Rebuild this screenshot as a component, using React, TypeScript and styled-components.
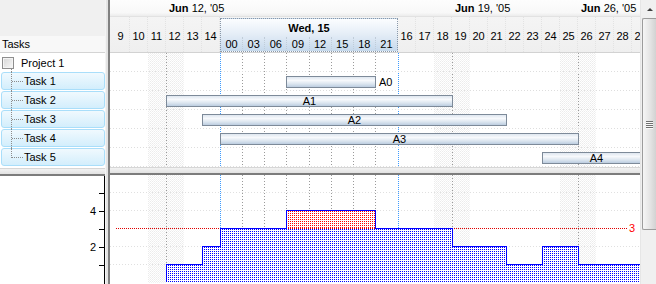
import React from 'react';
import styled, { createGlobalStyle } from 'styled-components';

const Global = createGlobalStyle`
  html, body { margin: 0; padding: 0; background: #fff; }
  body { font-family: "Liberation Sans", Arial, sans-serif; font-size: 11px; color: #000; }
  * { box-sizing: border-box; }
`;

/* ---------- time scale helpers ---------- */
const DAY_W = 18;
const EXP_W = 178;
const dayX = (d: number) => (d <= 15 ? 2 + (d - 9) * DAY_W : 288 + (d - 16) * DAY_W);
const hourX = (h: number) => Math.floor(110 + (h / 24) * EXP_W);
const CHART_W = 530;

const days = Array.from({ length: 21 }, (_, i) => 9 + i);
const hours = ['00', '03', '06', '09', '12', '15', '18', '21'];
const weekends = [11, 18, 25];
const weeks = [
  { day: 12, label: '12, \'05' },
  { day: 19, label: '19, \'05' },
  { day: 26, label: '26, \'05' },
];

type Bar = { row: number; x1: number; x2: number; label: string; outside?: boolean };
const bars: Bar[] = [
  { row: 1, x1: hourX(9), x2: hourX(21), label: 'A0', outside: true },
  { row: 2, x1: dayX(12), x2: dayX(19), label: 'A1' },
  { row: 3, x1: dayX(14), x2: dayX(22), label: 'A2' },
  { row: 4, x1: dayX(15), x2: dayX(26), label: 'A3' },
  { row: 5, x1: dayX(24), x2: dayX(30), label: 'A4' },
];

/* ---------- frame ---------- */
const Frame = styled.div`
  display: flex;
  width: 656px;
  height: 284px;
  overflow: hidden;
  background: #fff;
`;

const HSplit = styled.div`
  height: 8px;
  flex: none;
  background: linear-gradient(#f2f2f2, #e2e2e2);
  border-top: 1px solid #d6d6d6;
  border-bottom: 2px solid #7c7c7c;
`;

const VSplit = styled.div`
  width: 5px;
  flex: none;
  background: #e4e4e4;
  border-right: 2px solid #808080;
  border-left: 1px solid #f4f4f4;
`;

/* ---------- left panel ---------- */
const LeftCol = styled.div`
  width: 105px;
  flex: none;
  display: flex;
  flex-direction: column;
`;

const LeftTop = styled.div`
  height: 168px;
  flex: none;
  display: flex;
  flex-direction: column;
`;

const Blank = styled.div`
  height: 36px;
  background: #f0f0f0;
`;

const ColHeader = styled.div`
  height: 17px;
  background: #f8f8f8;
  border-bottom: 1px solid #d4d4d4;
  padding-left: 2px;
  line-height: 16px;
`;

const ProjectRow = styled.div`
  height: 19px;
  display: flex;
  align-items: center;
  padding-left: 2px;
  gap: 7px;
  position: relative;
  &::after {
    content: '';
    position: absolute;
    left: 11px;
    top: 16px;
    bottom: 0;
    border-left: 1px dotted #8c8c8c;
  }
`;

const CheckBox = styled.span`
  width: 12px;
  height: 12px;
  border: 1px solid #8e8e8e;
  background: linear-gradient(135deg, #d6d6d6, #f8f8f8);
  box-shadow: inset 0 0 0 1px #f4f4f4;
`;

const TaskRow = styled.div<{ $last?: boolean }>`
  height: 19px;
  padding: 0 0 1px 1px;
  position: relative;
  &::before {
    content: '';
    position: absolute;
    left: 11px;
    top: 0;
    height: ${(p) => (p.$last ? '10px' : '19px')};
    border-left: 1px dotted #8c8c8c;
    z-index: 1;
  }
`;

const TaskBox = styled.div`
  height: 18px;
  border: 1px solid #a9defa;
  border-radius: 3px;
  background: linear-gradient(#f0f9fe, #d3eefc);
  display: flex;
  align-items: center;
  padding-left: 22px;
  position: relative;
  &::before {
    content: '';
    position: absolute;
    left: 10px;
    width: 11px;
    top: 8px;
    border-top: 1px dotted #8c8c8c;
  }
`;

const LeftBottom = styled.div`
  flex: 1;
  position: relative;
`;

/* ---------- chart ---------- */
const ChartCol = styled.div`
  width: ${CHART_W}px;
  flex: none;
  display: flex;
  flex-direction: column;
  overflow: hidden;
`;

const TopBand = styled.div`
  height: 17px;
  flex: none;
  display: flex;
  background: linear-gradient(#fdfdfd 0%, #f8f8f8 80%, #ececec 100%);
  border-bottom: 1px solid #e2e2e2;
  white-space: nowrap;
`;

const WeekCell = styled.div<{ $w: number }>`
  width: ${(p) => p.$w}px;
  flex: none;
  padding-left: 3px;
  line-height: 16px;
  b { font-weight: bold; }
`;

const DayBand = styled.div`
  height: 36px;
  flex: none;
  display: flex;
  padding-left: 2px;
  background: linear-gradient(#f4f4f4, #efefef);
  border-bottom: 1px solid #d2d2d2;
`;

const DayCell = styled.div`
  width: ${DAY_W}px;
  flex: none;
  display: flex;
  align-items: center;
  justify-content: center;
  padding-top: 2px;
  border-right: 1px dotted #e2e2e2;
`;

const ExpandedDay = styled.div`
  width: ${EXP_W}px;
  flex: none;
  margin-top: 1px;
  border: 1px dotted #8a98a8;
  background: linear-gradient(#fbfdff, #e6eef7 45%, #c6d9ec);
  display: flex;
  flex-direction: column;
`;

const ExpTitle = styled.div`
  height: 18px;
  line-height: 18px;
  text-align: center;
  font-weight: bold;
`;

const HourRow = styled.div`
  display: flex;
  height: 15px;
  line-height: 14px;
`;

const HourCell = styled.div`
  flex: 1;
  text-align: center;
  & + & { border-left: 1px dotted #c0ccd8; }
`;

const Body = styled.div`
  height: 114px;
  flex: none;
  position: relative;
`;

const Layer = styled.svg`
  position: absolute;
  left: 0;
  top: 0;
  display: block;
`;

const BarBox = styled.div`
  position: absolute;
  height: 12px;
  border: 1px solid #7d8a99;
  background: linear-gradient(#dfe7f0, #f7f9fc 35%, #dbe5ef 70%, #bccde0);
  display: flex;
  align-items: center;
  justify-content: center;
  line-height: 10px;
  white-space: nowrap;
`;

const OutLabel = styled.span`
  position: absolute;
  left: 100%;
  margin-left: 4px;
`;

const Histo = styled.div`
  flex: 1;
  position: relative;
`;

/* ---------- scrollbar ---------- */
const ScrollCol = styled.div`
  width: 16px;
  flex: none;
  display: flex;
  flex-direction: column;
  background: #f0f0f0;
  border-left: 1px solid #e6e6e6;
`;

const ArrowBtn = styled.div`
  height: 18px;
  flex: none;
  display: flex;
  align-items: center;
  justify-content: center;
  padding-left: 2px;
  &::before {
    content: '';
    border-left: 3px solid transparent;
    border-right: 3px solid transparent;
    border-bottom: 3px solid #404040;
  }
`;

const Thumb = styled.div`
  height: 212px;
  flex: none;
  margin-left: 1px;
  border: 1px solid #9c9c9c;
  border-right: none;
  border-radius: 2px 0 0 2px;
  background: linear-gradient(90deg, #f6f6f6, #e6e6e6 50%, #d2d2d2);
  display: flex;
  flex-direction: column;
  align-items: center;
  justify-content: center;
  gap: 1px;
`;

const Grip = styled.span`
  width: 7px;
  height: 1px;
  background: #707070;
  box-shadow: 0 1px 0 #fafafa;
`;

/* ---------- shared grid drawing ---------- */
const Patterns = ({ id }: { id: string }) => (
  <defs>
    <pattern id={`wk${id}`} width="2" height="2" patternUnits="userSpaceOnUse">
      <rect width="1" height="1" fill="#ececec" shapeRendering="crispEdges" />
      <rect x="1" y="1" width="1" height="1" fill="#f2f2f2" shapeRendering="crispEdges" />
    </pattern>
    <pattern id={`bl${id}`} width="2" height="2" patternUnits="userSpaceOnUse">
      <rect width="2" height="2" fill="#fff" shapeRendering="crispEdges" />
      <rect width="1" height="1" fill="#0000ff" shapeRendering="crispEdges" />
    </pattern>
    <pattern id={`rd${id}`} width="2" height="2" patternUnits="userSpaceOnUse">
      <rect width="2" height="2" fill="#fff" shapeRendering="crispEdges" />
      <rect width="1" height="1" fill="#ff0000" shapeRendering="crispEdges" />
    </pattern>
  </defs>
);

const VGrid = ({ h, id }: { h: number; id: string }) => (
  <g shapeRendering="crispEdges">
    {weekends.map((d) => (
      <rect key={d} x={dayX(d)} y={0} width={DAY_W * 2} height={h} fill={`url(#wk${id})`} />
    ))}
    {[1, 2, 3, 4, 5, 6, 7].map((k) => {
      const x = Math.floor(110 + k * 22.25) + 0.5;
      return <line key={k} x1={x} x2={x} y1={0} y2={h} stroke="#9a9a9a" strokeDasharray="1 2" />;
    })}
    {weeks.map((w) => (
      <line key={w.day} x1={dayX(w.day) + 0.5} x2={dayX(w.day) + 0.5} y1={0} y2={h} stroke="#9a9a9a" strokeDasharray="1 2" />
    ))}
    {[110, 288].map((x) => (
      <line key={x} x1={x + 0.5} x2={x + 0.5} y1={0} y2={h} stroke="#3d9bff" strokeDasharray="1 1" />
    ))}
  </g>
);

/* histogram geometry */
const vy = (v: number) => 107 - 18 * v;
const steps: [number, number][] = [
  [dayX(12), 1], [dayX(14), 2], [dayX(15), 3], [hourX(9), 4], [hourX(21), 3],
  [dayX(19), 2], [dayX(22), 1], [dayX(24), 2], [dayX(26), 1], [CHART_W, 0],
];
const outline = (() => {
  const pts: string[] = [`${steps[0][0] + 0.5},${vy(0)}`];
  for (let i = 0; i < steps.length - 1; i++) {
    const [x, v] = steps[i];
    const [nx] = steps[i + 1];
    pts.push(`${x + 0.5},${vy(v) + 0.5}`, `${nx + 0.5},${vy(v) + 0.5}`);
  }
  return pts.join(' ');
})();
const fillPts = (() => {
  const pts: string[] = [`${steps[0][0]},108`];
  for (let i = 0; i < steps.length - 1; i++) {
    const [x, v] = steps[i];
    const [nx] = steps[i + 1];
    pts.push(`${x},${vy(v)}`, `${nx},${vy(v)}`);
  }
  pts.push(`${CHART_W},108`);
  return pts.join(' ');
})();

export default function App() {
  return (
    <>
      <Global />
      <Frame>
        <LeftCol>
          <LeftTop>
            <Blank />
            <ColHeader>Tasks</ColHeader>
            <ProjectRow>
              <CheckBox />
              <span>Project 1</span>
            </ProjectRow>
            {[1, 2, 3, 4, 5].map((n) => (
              <TaskRow key={n} $last={n === 5}>
                <TaskBox>Task {n}</TaskBox>
              </TaskRow>
            ))}
          </LeftTop>
          <HSplit />
          <LeftBottom>
            <Layer width={105} height={108} shapeRendering="crispEdges">
              <line x1={104.5} x2={104.5} y1={0} y2={108} stroke="#000" />
              {[1, 2, 3, 4, 5].map((v) => (
                <line key={v} x1={99} x2={105} y1={vy(v) + 0.5} y2={vy(v) + 0.5} stroke="#000" />
              ))}
              {[2, 4].map((v) => (
                <text key={v} x={96} y={vy(v) + 4} textAnchor="end" fontSize="11" fontFamily="Liberation Sans, Arial, sans-serif">
                  {v}
                </text>
              ))}
            </Layer>
          </LeftBottom>
        </LeftCol>
        <VSplit />
        <ChartCol>
          <TopBand>
            <WeekCell $w={dayX(12)} />
            {weeks.map((w) => (
              <WeekCell key={w.day} $w={w.day === 12 ? dayX(19) - dayX(12) : 126}>
                <b>Jun</b> {w.label}
              </WeekCell>
            ))}
          </TopBand>
          <DayBand>
            {days.map((d) =>
              d === 15 ? (
                <ExpandedDay key={d}>
                  <ExpTitle>Wed, 15</ExpTitle>
                  <HourRow>
                    {hours.map((h) => (
                      <HourCell key={h}>{h}</HourCell>
                    ))}
                  </HourRow>
                </ExpandedDay>
              ) : (
                <DayCell key={d}>{d}</DayCell>
              )
            )}
          </DayBand>
          <Body>
            <Layer width={CHART_W} height={114}>
              <Patterns id="b" />
              <VGrid h={114} id="b" />
              {[1, 2, 3, 4, 5, 6].map((r) => (
                <line key={r} x1={0} x2={CHART_W} y1={r * 19 - 0.5} y2={r * 19 - 0.5} stroke="#dedede" strokeDasharray="1 2" shapeRendering="crispEdges" />
              ))}
            </Layer>
            {bars.map((b) => (
              <BarBox key={b.label} style={{ left: b.x1, width: b.x2 - b.x1 + 1, top: b.row * 19 + 4 }}>
                {b.outside ? <OutLabel>{b.label}</OutLabel> : b.label}
              </BarBox>
            ))}
          </Body>
          <HSplit />
          <Histo>
            <Layer width={CHART_W} height={108}>
              <Patterns id="h" />
              <VGrid h={108} id="h" />
              <g shapeRendering="crispEdges">
                {[1, 2, 4, 5].map((v) => (
                  <line key={v} x1={0} x2={CHART_W} y1={vy(v) + 0.5} y2={vy(v) + 0.5} stroke="#e0e0e0" strokeDasharray="1 2" />
                ))}
                <polygon points={fillPts} fill="url(#blh)" />
                <rect x={hourX(9)} y={vy(4)} width={hourX(21) - hourX(9)} height={18} fill="url(#rdh)" />
                <line x1={6} x2={518} y1={vy(3) + 0.5} y2={vy(3) + 0.5} stroke="#e00000" strokeDasharray="1 1" />
                <polyline points={outline} fill="none" stroke="#0000ff" />
              </g>
              <text x={519} y={vy(3) + 4} fill="#ff0000" fontSize="11" fontFamily="Liberation Sans, Arial, sans-serif">
                3
              </text>
            </Layer>
          </Histo>
        </ChartCol>
        <ScrollCol>
          <ArrowBtn />
          <Thumb>
            <Grip />
            <Grip />
            <Grip />
            <Grip />
          </Thumb>
        </ScrollCol>
      </Frame>
    </>
  );
}
